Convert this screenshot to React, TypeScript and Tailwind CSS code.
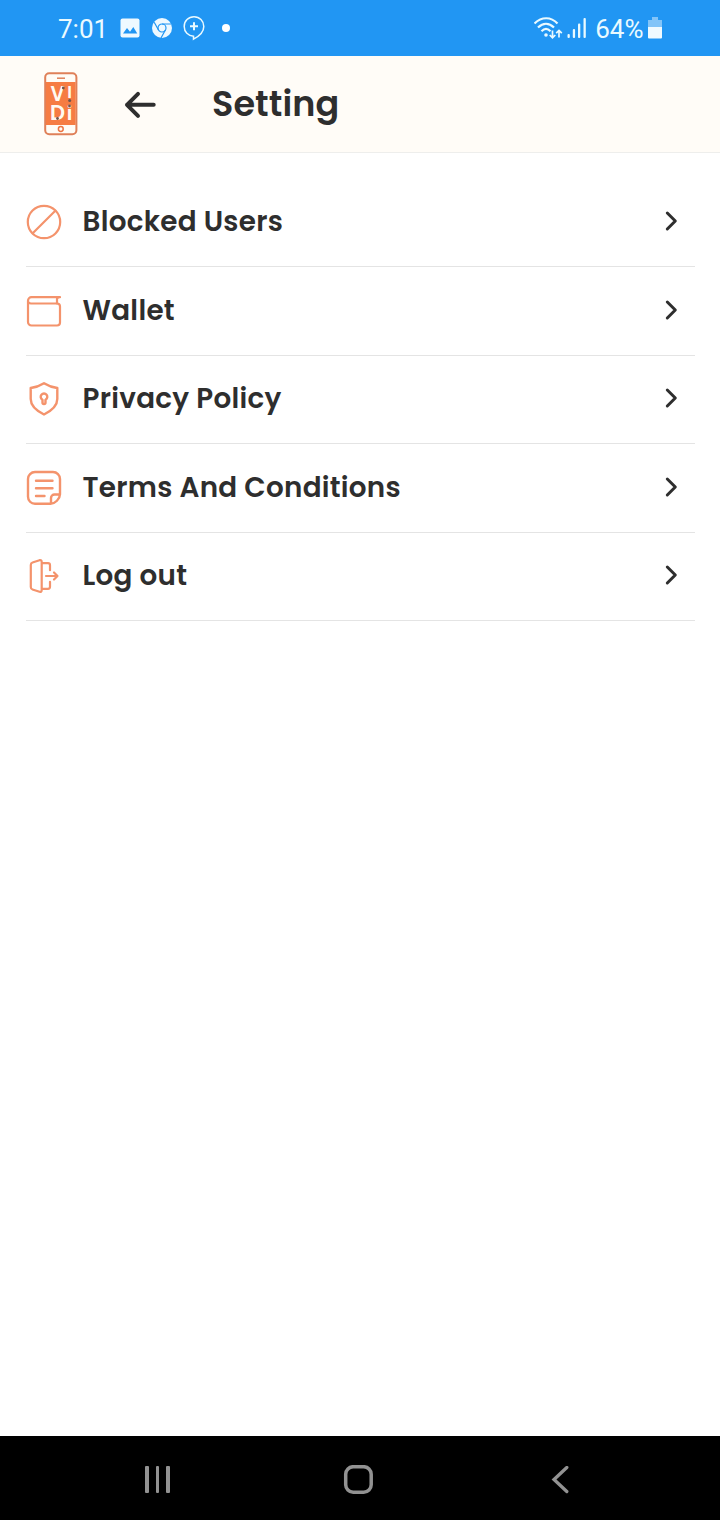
import { FC, PropsWithChildren, ReactNode } from "react";

const StatusBar: FC = () => {
  return (
    <div className="flex h-14 items-center bg-[#2196f3] px-[58px] font-['Roboto',sans-serif] text-[26px] leading-none text-[#eafaff]">
      <span className="w-[62px] pt-[1px]">7:01</span>
      <svg width="20" height="20" viewBox="0 0 20 20" className="mr-3">
        <rect x="0.5" y="0.5" width="19" height="19" rx="2" fill="#eef9ff" />
        <path d="M3 15.5 7 10l3 3.7 3.3-4.7 4 6.5z" fill="#2196f3" />
      </svg>
      <svg width="20" height="20" viewBox="0 0 20 20" className="mr-3">
        <circle cx="10" cy="10" r="10" fill="#eef9ff" />
        <g fill="none" stroke="#2196f3" strokeWidth="1.2">
          <circle cx="10" cy="10" r="4" />
          <path d="M10 6h9M6.5 12 2.2 4.2M13.4 12 9 20" />
        </g>
      </svg>
      <svg width="22" height="26" viewBox="0 0 22 26" className="-ml-[1px]">
        <path
          d="M10.5 21.2C5.2 21 1.2 17 1.2 11.5S5.4 1.8 11 1.8s9.8 4.2 9.8 9.7c0 5.3-4.4 9.6-10.3 12.7z"
          fill="none"
          stroke="#eafaff"
          strokeWidth="1.5"
        />
        <path d="M11 7.3v8M7 11.3h8" stroke="#eafaff" strokeWidth="2" />
      </svg>
      <span className="ml-[17px] h-2 w-2 rounded-full bg-white" />
      <div className="ml-auto flex items-center">
        <svg
          width="30"
          height="24"
          viewBox="0 0 30 24"
          fill="none"
          stroke="#eafaff"
          strokeWidth="2.2"
        >
          <path d="M0.5 7.5c7-7 16.5-7 23 0M4 11.5c5-5 11-5 16 0M7.5 15.2c3-3 6-3 9 0" />
          <circle cx="12" cy="19" r="1.8" fill="#eafaff" stroke="none" />
          <path
            d="M18.5 14.5v7M15.7 19l2.8 2.8 2.8-2.8M25 21.5v-7M22.2 17.2l2.8-2.8 2.8 2.8"
            strokeWidth="1.7"
          />
        </svg>
        <svg width="20" height="22" viewBox="0 0 20 22" className="ml-[3px]" fill="#eafaff">
          <rect x="0.5" y="17" width="2.3" height="4" rx="1" />
          <rect x="5.8" y="12" width="2.3" height="9" rx="1" />
          <rect x="11" y="6.5" width="2.3" height="14.5" rx="1" />
          <rect x="16.5" y="1" width="2.3" height="20" rx="1" />
        </svg>
        <span className="ml-[8px] pt-[1px]">64%</span>
        <svg width="14" height="22" viewBox="0 0 14 22" className="ml-[4.5px]">
          <path d="M4 0h6v3h4v8H0V3h4z" fill="#82c4f8" />
          <path d="M0 10h14v10.5a1 1 0 0 1-1 1H1a1 1 0 0 1-1-1z" fill="#f0faff" />
        </svg>
      </div>
    </div>
  );
};

const Logo: FC = () => (
  <svg width="34" height="64" viewBox="0 0 34 64">
    <rect x="1.2" y="1.2" width="31.2" height="61" rx="4" fill="#fffcf6" stroke="#df8059" strokeWidth="2" />
    <rect x="2" y="10" width="29.6" height="43" fill="#f67c43" />
    <path d="M13 6.2h8" stroke="#df8059" strokeWidth="1.5" />
    <circle cx="16.8" cy="57" r="2.4" fill="none" stroke="#ed7442" strokeWidth="1.5" />
    <g fill="#fffaf2" className="font-['Poppins',sans-serif] font-semibold">
      <text x="6.5" y="29" fontSize="21" textLength="14" lengthAdjust="spacingAndGlyphs">V</text>
      <text x="23.3" y="25.5" fontSize="17">I</text>
      <text x="6" y="48" fontSize="21" textLength="15" lengthAdjust="spacingAndGlyphs">D</text>
      <text x="22.8" y="48" fontSize="20">i</text>
    </g>
    <g fill="#71534a">
      <circle cx="19.3" cy="16" r="1.4" />
      <circle cx="25.7" cy="28.5" r="1.5" />
      <circle cx="25.5" cy="34" r="1.4" />
      <circle cx="13.5" cy="46.5" r="1.4" />
    </g>
  </svg>
);

const Header: FC = () => {
  return (
    <header className="flex h-[97px] items-center border-b border-[#eeeeec] bg-[#fffcf7] pl-11">
      <Logo />
      <svg
        width="34"
        height="30"
        viewBox="0 0 34 30"
        className="ml-[45px]"
        fill="none"
        stroke="#2e2e2e"
        strokeWidth="4"
        strokeLinecap="round"
        strokeLinejoin="round"
      >
        <path d="M30.7 15.8H4M15 4.8l-11 11 11 11" />
      </svg>
      <h1 className="mb-[2px] ml-[55px] text-[35px] leading-none font-semibold tracking-[0.1px]">Setting</h1>
    </header>
  );
};

const RowIcon: FC<PropsWithChildren> = ({ children }) => (
  <svg
    width="36"
    height="36"
    viewBox="0 0 36 36"
    fill="none"
    stroke="#f4936c"
    strokeWidth="2.2"
    strokeLinecap="round"
    strokeLinejoin="round"
  >
    {children}
  </svg>
);

type Row = { label: string; icon: ReactNode };

const rows: Row[] = [
  {
    label: "Blocked Users",
    icon: (
      <>
        <circle cx="18" cy="18" r="16.2" />
        <path d="M6.7 29.3 29.3 6.7" />
      </>
    ),
  },
  {
    label: "Wallet",
    icon: (
      <>
        <path d="M34 4.2H5.5A3.5 3.5 0 0 0 2 7.7V29a3.5 3.5 0 0 0 3.5 3.5H31a3 3 0 0 0 3-3V13.5a3 3 0 0 0-3-3H5C3 10.5 2 9.5 2 8" />
        <path d="M32.5 4.5q-1.5 0-1.5 1.5v4.5" />
      </>
    ),
  },
  {
    label: "Privacy Policy",
    icon: (
      <g strokeWidth="2.4">
        <path d="M18 2.2c4 2.5 8.5 4.2 13.3 4.8V18c0 7.5-6.3 12-13.3 15.5C11 30 4.7 25.5 4.7 18V7C9.5 6.4 14 4.7 18 2.2z" />
        <path d="M16.5 18.8a3.3 3.3 0 1 1 3 0v2.7a1.5 1.5 0 0 1-3 0z" />
      </g>
    ),
  },
  {
    label: "Terms And Conditions",
    icon: (
      <g strokeWidth="2.4">
        <path d="M24.5 33.8H9a7 7 0 0 1-7-7V9a7 7 0 0 1 7-7h18a7 7 0 0 1 7 7v15.3c0 4.5-5 9.5-9.5 9.5zM25 33.5V28a3.5 3.5 0 0 1 3.5-3.5H34" />
        <path d="M10 10.7h16.5M10 18.2h16.5M10 26h8.5" />
      </g>
    ),
  },
  {
    label: "Log out",
    icon: (
      <>
        <path d="M13.5 2.2 6.5 4.5Q4.8 5 4.8 7v22q0 2 1.7 2.5l7 2.3q2.2.5 2.2-1.8V4q0-2.2-2.2-1.8z" />
        <path d="M16 5.2h6q2 0 2 2v5M16 30.8h6q2 0 2-2v-5M20 18h11.5M28 14.5l3.5 3.5-3.5 3.5" />
      </>
    ),
  },
];

const SettingRow: FC<Row> = ({ label, icon }) => (
  <li className="flex h-[88.5px] items-center border-b border-[#e4e4e4]">
    <RowIcon>{icon}</RowIcon>
    <span className="mb-[0.5px] ml-[20.5px] text-[27.8px] leading-[28px] font-semibold tracking-[0.28px]">
      {label}
    </span>
    <svg
      width="18"
      height="24"
      viewBox="0 0 18 24"
      className="mr-[15px] ml-auto"
      fill="none"
      stroke="#2e2e2e"
      strokeWidth="3"
      strokeLinecap="round"
      strokeLinejoin="round"
    >
      <path d="m5.3 3 8 8-8 8" />
    </svg>
  </li>
);

const NavigationBar: FC = () => {
  return (
    <nav className="flex h-[84px] items-center bg-black pt-[3px] pr-[151px] pl-36">
      <svg width="28" height="28" viewBox="0 0 28 28" fill="#929292">
        <rect x="1" y="0" width="4" height="27" rx="1" />
        <rect x="12" y="0" width="3" height="27" rx="1" />
        <rect x="22" y="0" width="4" height="27" rx="1" />
      </svg>
      <svg width="30" height="30" viewBox="0 0 30 30" className="ml-[171px]">
        <rect x="2.7" y="1.7" width="25.5" height="25.5" rx="7.5" fill="none" stroke="#929292" strokeWidth="3.5" />
      </svg>
      <svg width="18" height="28" viewBox="0 0 18 28" className="ml-auto">
        <path
          d="M15.8 1.5 3 13.5l12.8 12"
          fill="none"
          stroke="#929292"
          strokeWidth="3.3"
          strokeLinecap="round"
        />
      </svg>
    </nav>
  );
};

export default function App() {
  return (
    <div className="flex h-[1520px] w-[720px] flex-col bg-white font-['Poppins','Inter',sans-serif] text-[#2e2e2e]">
      <StatusBar />
      <Header />
      <main className="flex-1 pt-[25.5px] pr-[25px] pl-[26px]">
        <ul>
          {rows.map((row) => (
            <SettingRow key={row.label} {...row} />
          ))}
        </ul>
      </main>
      <NavigationBar />
    </div>
  );
}
